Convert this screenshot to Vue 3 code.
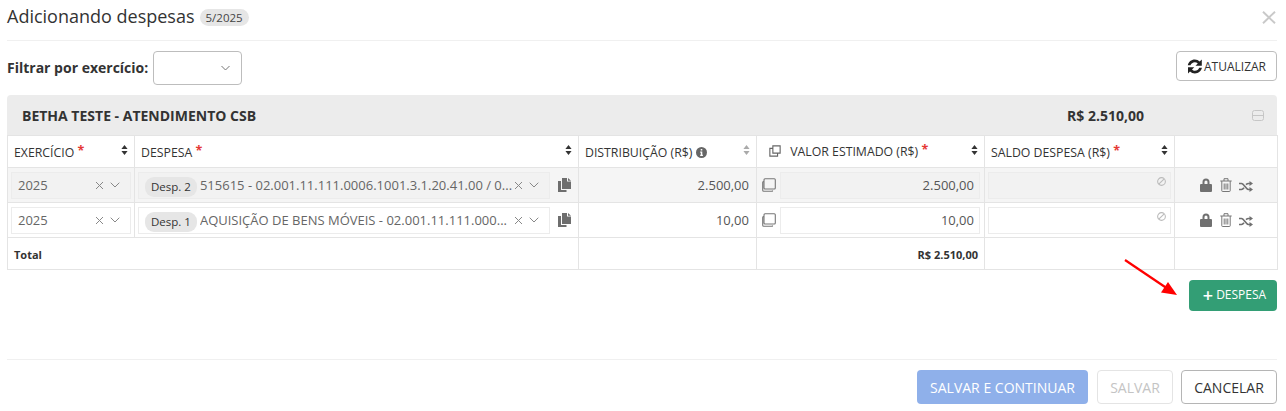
<script setup>
const rows = [
  { year: '2025', tag: 'Desp. 2', text: '515615 - 02.001.11.111.0006.1001.3.1.20.41.00 / 0...', dist: '2.500,00', est: '2.500,00', locked: true },
  { year: '2025', tag: 'Desp. 1', text: 'AQUISIÇÃO DE BENS MÓVEIS - 02.001.11.111.000...', dist: '10,00', est: '10,00', locked: false },
]
</script>

<template>
  <div class="page">
    <header class="head">
      <h1>Adicionando despesas</h1>
      <span class="badge">5/2025</span>
      <svg class="close" width="14" height="13" viewBox="0 0 14 13"><path d="M1 .7l12 11.600M13 .7L1 12.300" stroke="#c9c9c9" stroke-width="1.900" fill="none" /></svg>
    </header>

    <div class="filter">
      <label>Filtrar por exercício:</label>
      <div class="filter-select">
        <svg class="chev" width="9" height="6" viewBox="0 0 9 6"><path d="M.5 1l4 4 4-4" stroke="#777" fill="none" /></svg>
      </div>
      <button class="refresh">
        <svg width="16" height="15" viewBox="0 0 16 15"><path d="M.8 6.300C1.400 2.900 4.300.6 7.800.6c1.900 0 3.600.7 4.900 2L14.800.5v6.300H8.500l2.300-2.300C9.900 3.700 8.900 3.200 7.800 3.200c-2 0-3.700 1.300-4.300 3.100zM1 8.200h6.300L5 10.500c.8.800 1.800 1.300 2.900 1.300 2 0 3.700-1.300 4.300-3.100h2.700c-.6 3.400-3.500 5.700-7 5.700-1.900 0-3.600-.7-4.900-2L1 14.500z" fill="#222" /></svg>
        <span>ATUALIZAR</span>
      </button>
    </div>

    <section class="group">
      <div class="group-head">
        <strong class="group-name">BETHA TESTE - ATENDIMENTO CSB</strong>
        <strong class="group-total">R$ 2.510,00</strong>
        <svg class="collapse" width="12" height="11" viewBox="0 0 12 11"><rect x=".5" y=".5" width="11" height="10" rx="2" fill="none" stroke="#c6c6c6" /><path d="M.5 5.500h11" stroke="#c6c6c6" /></svg>
      </div>
      <table>
        <colgroup>
          <col style="width:127px" /><col style="width:444px" /><col style="width:178px" /><col style="width:228px" /><col style="width:190px" /><col style="width:103px" />
        </colgroup>
        <thead>
          <tr>
            <th><div class="th"><span class="lbl">EXERCÍCIO <i>*</i></span><svg class="sort" width="7" height="10" viewBox="0 0 8 12"><path d="M4 0l3.700 4.800H.3zM4 12L.3 7.200h7.400z" fill="#333" /></svg></div></th>
            <th><div class="th"><span class="lbl">DESPESA <i>*</i></span><svg class="sort" width="7" height="10" viewBox="0 0 8 12"><path d="M4 0l3.700 4.800H.3zM4 12L.3 7.200h7.400z" fill="#333" /></svg></div></th>
            <th><div class="th"><span class="lbl inline">DISTRIBUIÇÃO (R$)
              <svg width="11" height="11" viewBox="0 0 11 11"><circle cx="5.500" cy="5.500" r="5.500" fill="#666" /><path d="M4.700 2h1.600v1.500H4.700zM4.200 4.500h2.100v3.200h.6V9H4.200V7.700h.6V5.800h-.6z" fill="#fff" /></svg></span>
              <svg class="sort" width="7" height="10" viewBox="0 0 8 12"><path d="M4 0l3.700 4.800H.3zM4 12L.3 7.200h7.400z" fill="#aaa" /></svg></div></th>
            <th><div class="th"><span class="inline">
              <svg class="cp-h" width="12" height="12" viewBox="0 0 14 14"><path d="M4.500 1h8.500v8.500H4.500zM4 4H1v9h9v-3" fill="none" stroke="#666" stroke-width="1.300" /></svg>
              VALOR ESTIMADO (R$) <i>*</i></span><svg class="sort" width="7" height="10" viewBox="0 0 8 12"><path d="M4 0l3.700 4.800H.3zM4 12L.3 7.200h7.400z" fill="#333" /></svg></div></th>
            <th><div class="th"><span class="lbl">SALDO DESPESA (R$) <i>*</i></span><svg class="sort" width="7" height="10" viewBox="0 0 8 12"><path d="M4 0l3.700 4.800H.3zM4 12L.3 7.200h7.400z" fill="#333" /></svg></div></th>
            <th></th>
          </tr>
        </thead>
        <tbody>
          <tr v-for="r in rows" :key="r.tag" class="row" :class="{ locked: r.locked }">
            <td class="pad">
              <div class="sel">
                <span class="val">{{ r.year }}</span>
                <svg width="9" height="9" viewBox="0 0 9 9"><path d="M1 1l7 7M8 1L1 8" stroke="#888" fill="none" /></svg>
                <svg class="down" width="10" height="6" viewBox="0 0 10 6"><path d="M.7.700L5 5 9.300.700" stroke="#888" fill="none" /></svg>
              </div>
            </td>
            <td class="pad">
              <div class="desp">
                <div class="sel wide">
                  <span class="tag">{{ r.tag }}</span>
                  <span class="val long">{{ r.text }}</span>
                  <svg width="9" height="9" viewBox="0 0 9 9"><path d="M1 1l7 7M8 1L1 8" stroke="#888" fill="none" /></svg>
                  <svg class="down" width="10" height="6" viewBox="0 0 10 6"><path d="M.7.700L5 5 9.300.700" stroke="#888" fill="none" /></svg>
                </div>
                <svg class="files" width="13" height="14" viewBox="0 0 13 14"><path d="M4 0h5v3.500h4V11H4z" fill="#6e6e6e" /><path d="M10 0l3 2.700h-3zM3 3H0v11h8.500v-2H3z" fill="#6e6e6e" /></svg>
              </div>
            </td>
            <td class="num">{{ r.dist }}</td>
            <td class="pad">
              <div class="est">
                <svg width="14" height="14" viewBox="0 0 14 14"><path d="M3 .7h9.300q1 0 1 1V10q0 1-1 1H3q-1 0-1-1V1.700q0-1 1-1zM1.500 3.500Q.7 3.700.7 4.500v7.800q0 1 1 1h8q.8 0 1-.8" fill="none" stroke="#777" stroke-width="1.100" /></svg>
                <div class="field right">{{ r.est }}</div>
              </div>
            </td>
            <td class="pad">
              <div class="field saldo">
                <svg width="9" height="9" viewBox="0 0 10 10"><circle cx="5" cy="5" r="4.300" fill="none" stroke="#bbb" stroke-width="1.200" /><path d="M2 8l6-6" stroke="#bbb" stroke-width="1.200" /></svg>
              </div>
            </td>
            <td>
              <div class="actions">
                <svg width="12" height="14" viewBox="0 0 12 14"><path d="M2.500 6V4a3.500 3.500 0 0 1 7 0v2h1.500a1 1 0 0 1 1 1v6a1 1 0 0 1-1 1H1a1 1 0 0 1-1-1V7a1 1 0 0 1 1-1zM4.500 6h3V4a1.500 1.500 0 0 0-3 0z" fill="#707070" fill-rule="evenodd" /></svg>
                <svg class="trash" width="12" height="14" viewBox="0 0 12 14"><path d="M.3 3h11.400M1.800 3v9.800q0 .7.700.7h7q.7 0 .7-.7V3M4 3V.7h4V3M4.200 5.500v6M6 5.500v6M7.800 5.500v6" fill="none" stroke="#777" /></svg>
                <svg class="shuffle" width="14" height="11" viewBox="0 0 14 11"><path d="M0 2.500h2.500c2.500 0 4.500 6 7 6h1.500M0 8.500h2.500c1 0 1.800-.8 2.500-1.700M7 3.700c.8-.7 1.600-1.200 2.500-1.200H11" fill="none" stroke="#707070" stroke-width="1.700" /><path d="M10.500 0L14 2.500 10.500 5zM10.500 6L14 8.500 10.500 11z" fill="#707070" /></svg>
              </div>
            </td>
          </tr>
          <tr class="total">
            <td colspan="2"><b>Total</b></td>
            <td></td>
            <td class="total-val"><b>R$ 2.510,00</b></td>
            <td></td>
            <td></td>
          </tr>
        </tbody>
      </table>
    </section>

    <div class="add-row">
      <svg class="arrow" width="56" height="40" viewBox="0 0 56 40"><path d="M1 1L44 30" stroke="#f00" stroke-width="2.200" /><path d="M53 36L37 33.500 44 23z" fill="#f00" /></svg>
      <button class="add"><span class="plus">+</span><span class="add-text">DESPESA</span></button>
    </div>

    <footer class="foot">
      <button class="primary">SALVAR E CONTINUAR</button>
      <button class="disabled">SALVAR</button>
      <button class="cancel">CANCELAR</button>
    </footer>
  </div>
</template>

<style>
html, body { margin: 0; background: #fff; }
</style>

<style scoped>
.page {
  width: 1286px;
  height: 411px;
  box-sizing: border-box;
  padding: 0 9px 0 7px;
  font-family: "Open Sans", "Noto Sans", sans-serif;
  color: #333;
  overflow: hidden;
}
.head {
  display: flex;
  align-items: center;
  height: 40px;
  border-bottom: 1px solid #f0f0f0;
  margin-top: -5px;
  padding-top: 5px;
  gap: 5px;
}
h1 {
  margin: 0;
  font-size: 18px;
  font-weight: 400;
  line-height: 24px;
  color: #333;
  position: relative;
  top: -4px;
}
.badge {
  position: relative;
  top: -3px;
  background: #e6e6e6;
  border-radius: 9px;
  font-size: 11.500px;
  line-height: 17px;
  padding: 0 6px;
  color: #444;
}
.close { margin-left: auto; margin-right: 1px; position: relative; top: -3px; }
.filter {
  display: flex;
  align-items: flex-start;
  margin-top: 10px;
  height: 44px;
}
.filter label {
  font-size: 14px;
  font-weight: 700;
  line-height: 34px;
  margin-right: 5px;
}
.filter-select {
  width: 89px;
  height: 34px;
  box-sizing: border-box;
  border: 1px solid #bdbdbd;
  border-radius: 4px;
  display: flex;
  align-items: center;
  justify-content: flex-end;
  padding-right: 11px;
}
.refresh {
  margin-left: auto;
  width: 101px;
  height: 30px;
  box-sizing: border-box;
  background: #fff;
  border: 1px solid #bdbdbd;
  border-radius: 4px;
  display: flex;
  align-items: center;
  justify-content: center;
  gap: 1px;
  padding: 0;
  font: 400 12px "Open Sans", sans-serif;
  color: #333;
}
.group { width: 1270px; }
.group-head {
  height: 40px;
  background: #ececec;
  border-radius: 4px 4px 0 0;
  display: flex;
  align-items: center;
  font-size: 14px;
  padding: 0 13px 0 15px;
  box-sizing: border-box;
  color: #333;
}
.group-name { font-weight: 700; }
.group-total { margin-left: auto; margin-right: 108px; font-weight: 700; }
table {
  width: 1270px;
  border-collapse: collapse;
  table-layout: fixed;
  border: 1px solid #e4e4e4;
  border-top: 0;
}
th, td { border: 1px solid #e4e4e4; padding: 0; }
thead tr { height: 32px; }
th { text-align: left; font-size: 12.300px; font-weight: 400; color: #333; }
.th {
  display: flex;
  justify-content: space-between;
  align-items: center;
  padding: 0 6px 0 6px;
}
.th .sort { position: relative; top: -2px; }
.lbl { position: relative; top: 1px; }
.th i { color: #e53935; font-style: normal; font-weight: 700; font-size: 12.500px; line-height: 10px; position: relative; top: -2px; }
.inline svg { vertical-align: -1px; }
.cp-h { margin: 0 6px 0 6px; }
tr.row { height: 35px; }
tr.locked { background: #f5f5f5; }
.pad { padding: 0 3px; }
.sel {
  height: 27px;
  box-sizing: border-box;
  border: 1px solid #ececec;
  display: flex;
  align-items: center;
  padding: 0 10px 0 6px;
  font-size: 13px;
  color: #666;
  background: #fff;
  overflow: hidden;
}
.locked .sel, .locked .field { background: #f2f2f2; }
.sel .val { flex: 1; }
.sel .down { margin-left: 6px; }
.desp { display: flex; align-items: center; gap: 8px; }
.sel.wide { width: 412px; flex: none; padding-left: 6px; }
.long { white-space: nowrap; overflow: hidden; }
.tag {
  background: #e6e6e6;
  border-radius: 9px;
  font-size: 11.500px;
  line-height: 20px;
  padding: 0 6px;
  margin-right: 3px;
  margin-top: 4px;
  color: #333;
}
.files { flex: none; }
.num { text-align: right; padding-right: 7px; font-size: 13px; color: #555; }
.est { display: flex; align-items: center; gap: 4px; padding-left: 2px; }
.est svg { flex: none; }
.field {
  height: 27px;
  box-sizing: border-box;
  border: 1px solid #ececec;
  font-size: 13px;
  color: #555;
  line-height: 25px;
  background: #fff;
}
.right { flex: 1; text-align: right; padding-right: 5px; margin-right: 1px; }
.saldo { display: flex; justify-content: flex-end; padding: 4px 4px 0 0; }
.saldo svg { flex: none; }
.actions {
  display: flex;
  justify-content: center;
  align-items: center;
  gap: 8px;
  padding-left: 1px;
}
.shuffle { position: relative; top: 1px; margin-left: -1px; }
tr.total { height: 32px; }
.total td { padding-bottom: 2px; }
.total b { font-size: 11px; font-weight: 700; color: #333; }
.total td:first-child { padding-left: 6px; }
.total-val { text-align: right; padding-right: 6px; }
.add-row {
  position: relative;
  display: flex;
  justify-content: flex-end;
  margin-top: 10px;
  height: 49px;
  border-bottom: 1px solid #f0f0f0;
  padding-bottom: 30px;
}
.arrow { position: absolute; left: 1117px; top: -21px; }
.add {
  width: 88px;
  height: 31px;
  border: 0;
  border-radius: 4px;
  background: #339e75;
  color: #fff;
  font: 400 12px "Open Sans", sans-serif;
  padding: 0 0 2px 3px;
  display: flex;
  align-items: center;
  justify-content: center;
  gap: 3px;
}
.plus { font-size: 18px; line-height: 14px; font-weight: 600; }
.foot {
  display: flex;
  justify-content: flex-end;
  gap: 8px;
  margin-top: 10px;
}
.foot button {
  height: 34px;
  box-sizing: border-box;
  border-radius: 4px;
  font: 400 14px "Open Sans", sans-serif;
  padding: 0;
}
.primary { width: 171px; margin-right: 1px; background: #8fb0ea; border: 0; color: #fff; font-weight: 500 !important; }
.disabled { width: 76px; background: #fff; border: 1px solid #e4e4e4; color: #c4c4c4; }
.cancel { width: 96px; background: #fff; border: 1px solid #b5b5b5; color: #333; }
</style>
